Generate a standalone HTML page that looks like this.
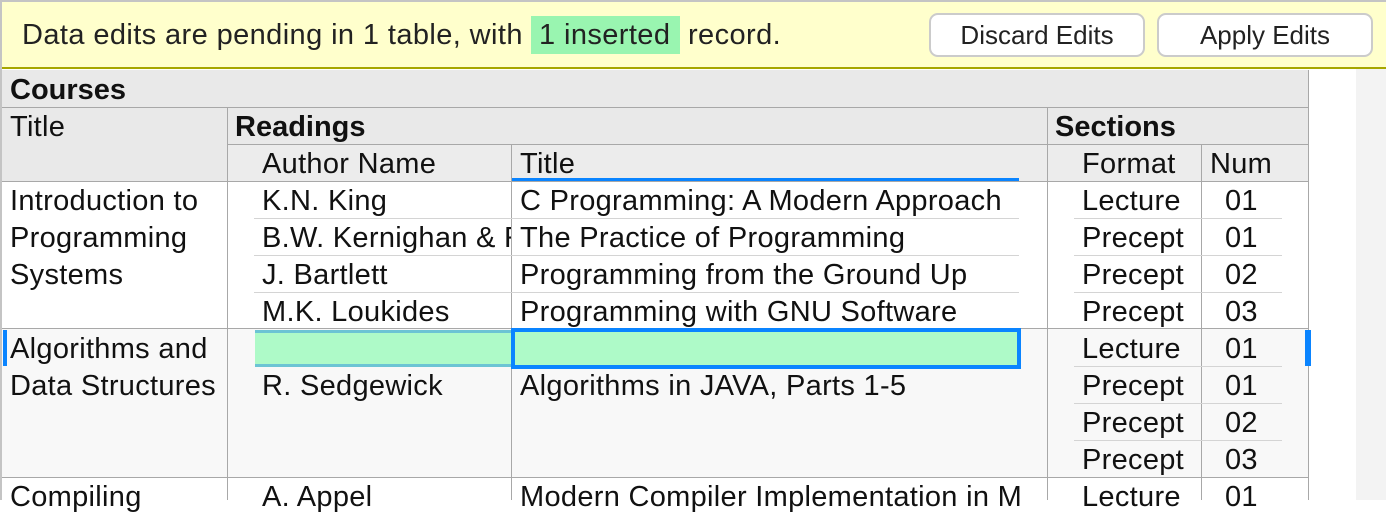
<!DOCTYPE html>
<html><head><meta charset="utf-8"><style>
*{margin:0;padding:0;box-sizing:border-box}
body{width:1386px;height:500px;overflow:hidden;background:#fff;font-family:"Liberation Sans",sans-serif;position:relative}
.a{position:absolute}
.t{position:absolute;font-size:29px;letter-spacing:0.3px;line-height:37px;color:#111;white-space:nowrap;overflow:hidden;padding-top:1px}
.b{font-weight:bold;letter-spacing:0}
.h{background:#e9e9e9}
.vl{position:absolute;width:1px;background:#a8a8a8}
.hl{position:absolute;height:1px;background:#a8a8a8}
.sl{position:absolute;height:1px;background:#d4d4d4}
.btn{position:absolute;top:13px;height:44px;border:2px solid #cbcbcb;border-radius:9px;background:#fff;font-size:26px;line-height:40px;text-align:center;color:#222}
.bn{position:absolute;top:18px;font-size:29px;letter-spacing:0.4px;line-height:34px;color:#222;white-space:nowrap}
</style></head><body>
<div class="a" style="left:0;top:0;width:1386px;height:2px;background:#c4c4c4"></div>
<div class="a" style="left:0;top:0;width:2px;height:500px;background:#c4c4c4"></div>
<div class="a" style="left:2px;top:2px;width:1384px;height:66px;background:#ffffcc"></div>
<div class="a" style="left:2px;top:67px;width:1384px;height:2px;background:#a6a600"></div>
<div class="a" style="left:531px;top:16px;width:149px;height:38px;background:#99f5b0"></div>
<div class="bn" style="left:22px">Data edits are pending in 1 table, with</div>
<div class="bn" style="left:539px">1 inserted</div>
<div class="bn" style="left:688px">record.</div>
<div class="btn" style="left:929px;width:216px">Discard Edits</div>
<div class="btn" style="left:1157px;width:216px">Apply Edits</div>
<div class="a" style="left:1356px;top:69px;width:30px;height:431px;background:#f3f3f3"></div>
<!-- header -->
<div class="a h" style="left:2px;top:70px;width:1307px;height:111px"></div>
<div class="a" style="left:227px;top:145px;width:1082px;height:36px;background:#ececec"></div>
<div class="hl" style="left:2px;top:107px;width:1307px"></div>
<div class="hl" style="left:227px;top:144px;width:1082px"></div>
<div class="hl" style="left:2px;top:181px;width:1307px"></div>
<div class="t b" style="left:10px;top:71px">Courses</div>
<div class="t" style="left:10px;top:108px">Title</div>
<div class="t b" style="left:235px;top:108px">Readings</div>
<div class="t b" style="left:1055px;top:108px">Sections</div>
<div class="t" style="left:262px;top:145px">Author Name</div>
<div class="t" style="left:520px;top:145px">Title</div>
<div class="t" style="left:1082px;top:145px">Format</div>
<div class="t" style="left:1210px;top:145px">Num</div>
<div class="a" style="left:511px;top:178px;width:508px;height:3px;background:#0a84ff"></div>
<!-- group 2 bg -->
<div class="a" style="left:2px;top:329px;width:1307px;height:149px;background:#f8f8f8"></div>
<div class="hl" style="left:2px;top:328px;width:1307px"></div>
<div class="hl" style="left:2px;top:477px;width:1307px"></div>
<div class="a" style="left:1308px;top:70px;width:1px;height:430px;background:#a8a8a8"></div>
<!-- vertical lines -->
<div class="vl" style="left:227px;top:107px;height:393px"></div>
<div class="vl" style="left:511px;top:144px;height:356px"></div>
<div class="vl" style="left:1047px;top:107px;height:393px"></div>
<div class="vl" style="left:1201px;top:144px;height:356px"></div>
<!-- sub lines -->
<div class="sl" style="left:254px;top:218px;width:765px"></div>
<div class="sl" style="left:254px;top:255px;width:765px"></div>
<div class="sl" style="left:254px;top:292px;width:765px"></div>
<div class="sl" style="left:1074px;top:218px;width:208px"></div>
<div class="sl" style="left:1074px;top:255px;width:208px"></div>
<div class="sl" style="left:1074px;top:292px;width:208px"></div>
<div class="sl" style="left:1074px;top:366px;width:208px"></div>
<div class="sl" style="left:1074px;top:403px;width:208px"></div>
<div class="sl" style="left:1074px;top:440px;width:208px"></div>
<!-- group 1 -->
<div class="t" style="left:10px;top:182px;width:216px">Introduction to<br>Programming<br>Systems</div>
<div class="t" style="left:262px;top:182px;width:249px">K.N. King<br>B.W. Kernighan &amp; R. Pike<br>J. Bartlett<br>M.K. Loukides</div>
<div class="t" style="left:520px;top:182px;width:500px">C Programming: A Modern Approach<br>The Practice of Programming<br>Programming from the Ground Up<br>Programming with GNU Software</div>
<div class="t" style="left:1082px;top:182px">Lecture<br>Precept<br>Precept<br>Precept</div>
<div class="t" style="left:1225px;top:182px">01<br>01<br>02<br>03</div>
<!-- group 2 -->
<div class="a" style="left:255px;top:330px;width:256px;height:37px;background:#aefac8;border-top:3px solid #6cc4d4;border-bottom:3px solid #6cc4d4"></div>
<div class="a" style="left:511px;top:328px;width:510px;height:41px;background:#aefac8;border:4px solid #0a84ff"></div>
<div class="a" style="left:3px;top:330px;width:4px;height:36px;background:#0a84ff"></div>
<div class="a" style="left:1305px;top:330px;width:6px;height:36px;background:#0a84ff"></div>
<div class="t" style="left:10px;top:330px;width:216px">Algorithms and<br>Data Structures</div>
<div class="t" style="left:262px;top:367px">R. Sedgewick</div>
<div class="t" style="left:520px;top:367px">Algorithms in JAVA, Parts 1-5</div>
<div class="t" style="left:1082px;top:330px">Lecture<br>Precept<br>Precept<br>Precept</div>
<div class="t" style="left:1225px;top:330px">01<br>01<br>02<br>03</div>
<!-- group 3 -->
<div class="t" style="left:10px;top:478px">Compiling</div>
<div class="t" style="left:262px;top:478px">A. Appel</div>
<div class="t" style="left:520px;top:478px;width:500px">Modern Compiler Implementation in ML</div>
<div class="t" style="left:1082px;top:478px">Lecture</div>
<div class="t" style="left:1225px;top:478px">01</div>
</body></html>
